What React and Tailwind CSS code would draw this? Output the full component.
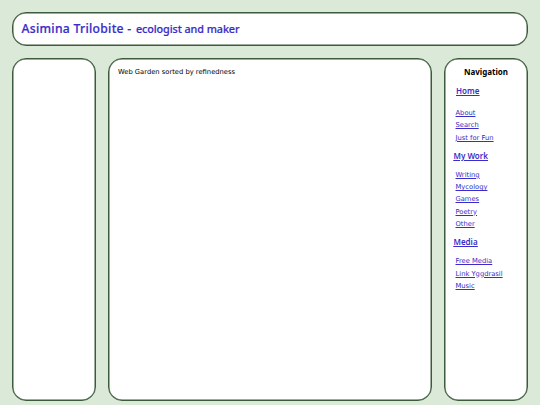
const groups = [
  { title: "Home", head: "mt-[6px] ml-[11px] mb-[9px]", links: ["About", "Search", "Just for Fun"] },
  { title: "My Work", head: "mt-[6px] ml-[8.5px] mb-[6px]", links: ["Writing", "Mycology", "Games", "Poetry", "Other"] },
  { title: "Media", head: "mt-[6px] ml-[8.5px] mb-[6px]", links: ["Free Media", "Link Yggdrasil", "Music"] },
];

const panel = "rounded-[14px] border border-[#3d5a3b] bg-white shadow-[inset_0_0_0_0.5px_#3d5a3b]";
const heading = "font-['Noto_Sans','DejaVu_Sans',sans-serif]";

export default function App() {
  return (
    <div className="flex h-[405px] w-[540px] flex-col gap-3 overflow-hidden bg-[#dbead8] px-3 pt-3 pb-1 font-['DejaVu_Sans',sans-serif] text-black">
      <header className={`${panel} flex h-[34px] shrink-0 items-center pl-[8.5px] whitespace-nowrap text-[#3a2cc8]`}>
        <h1 className={`${heading} text-[12.2px] font-medium tracking-[0.27px] [-webkit-text-stroke:0.2px_currentColor]`}>
          Asimina Trilobite - <span className="ml-[1px] text-[10.8px] tracking-[-0.08px]">ecologist and maker</span>
        </h1>
      </header>
      <div className="flex min-h-0 flex-1 gap-3">
        <aside className={`${panel} w-[84px] shrink-0`} />
        <main className={`${panel} flex-1 pt-[8px] pl-[9px]`}>
          <p className="text-[6.75px] leading-[11px] whitespace-nowrap">Web Garden sorted by refinedness</p>
        </main>
        <nav className={`${panel} w-[84px] shrink-0 pt-[6px] whitespace-nowrap`}>
          <h2 className={`${heading} text-center text-[8px] leading-[13px] font-bold`}>Navigation</h2>
          {groups.map((g) => (
            <section key={g.title} className="text-[#3a2cc8] first-of-type:pt-[1px]">
              <h3 className={`${heading} ${g.head} text-[8px] leading-[12px] font-semibold underline`}>
                <a href="#">{g.title}</a>
              </h3>
              <ul className="ml-[10.5px] pt-[1px] text-[6.75px] leading-[12.3px] underline">
                {g.links.map((l) => (
                  <li key={l}><a href="#">{l}</a></li>
                ))}
              </ul>
            </section>
          ))}
        </nav>
      </div>
    </div>
  );
}
